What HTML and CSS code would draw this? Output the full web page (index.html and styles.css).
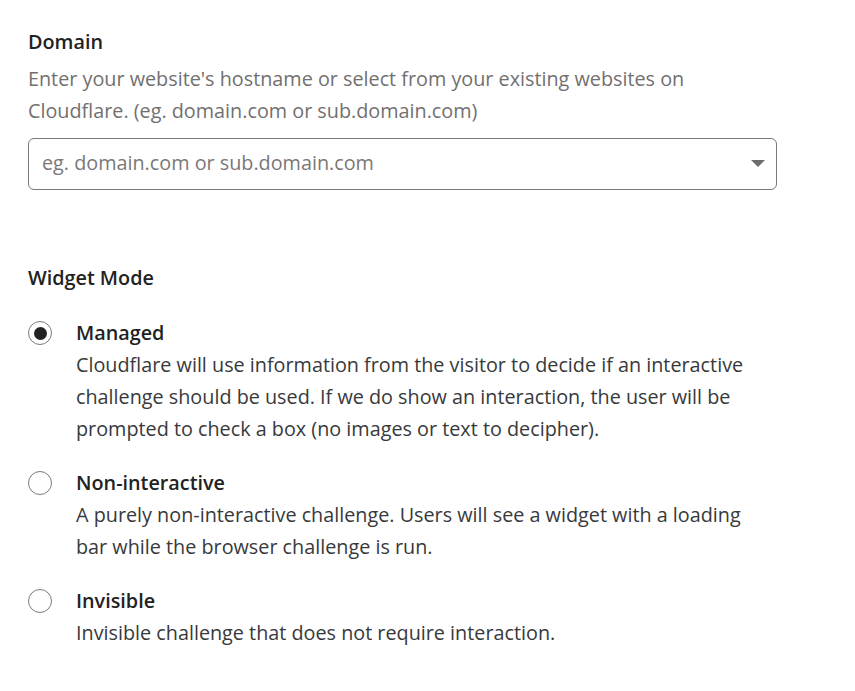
FILE: index.html
```html
<!DOCTYPE html>
<html lang="en">
<head>
    <meta charset="UTF-8">
    <meta name="viewport" content="width=device-width, initial-scale=1.0">
    <title>Turnstile widget</title>
    <link rel="stylesheet" href="styles.css">
</head>
<body>
    <div class="form">
        <div class="field">
            <label class="field-label" for="domain">Domain</label>
            <p class="field-help">Enter your website's hostname or select from your existing websites on Cloudflare. (eg. domain.com or sub.domain.com)</p>
            <div class="select">
                <input type="text" id="domain" placeholder="eg. domain.com or sub.domain.com">
                <span class="select-arrow"></span>
            </div>
        </div>

        <div class="field mode">
            <div class="field-label">Widget Mode</div>
            <label class="option">
                <input type="radio" name="mode" checked>
                <span class="radio"></span>
                <span class="option-text">
                    <span class="option-title">Managed</span>
                    <span class="option-desc">Cloudflare will use information from the visitor to decide if an interactive challenge should be used. If we do show an interaction, the user will be prompted to check a box (no images or text to decipher).</span>
                </span>
            </label>
            <label class="option">
                <input type="radio" name="mode">
                <span class="radio"></span>
                <span class="option-text">
                    <span class="option-title">Non-interactive</span>
                    <span class="option-desc">A purely non-interactive challenge. Users will see a widget with a loading bar while the browser challenge is run.</span>
                </span>
            </label>
            <label class="option">
                <input type="radio" name="mode">
                <span class="radio"></span>
                <span class="option-text">
                    <span class="option-title">Invisible</span>
                    <span class="option-desc">Invisible challenge that does not require interaction.</span>
                </span>
            </label>
        </div>
    </div>
</body>
</html>
```

FILE: styles.css
```css
body {
    margin: 0;
    background-color: #ffffff;
    font-family: "Open Sans", "Noto Sans", sans-serif;
    color: #222222;
}

.form {
    padding: 26px 28px;
    width: 750px;
}

.field-label {
    display: block;
    font-size: 19.8px;
    font-weight: 600;
    line-height: 32px;
    color: #222222;
}

.field-help {
    margin: 5px 0 0;
    font-size: 19.8px;
    line-height: 32px;
    color: #72706f;
}

.select {
    position: relative;
    margin-top: 11px;
}

.select input {
    box-sizing: border-box;
    width: 749px;
    height: 52px;
    padding: 0 40px 3px 13px;
    border: 1px solid #7a7a7a;
    border-radius: 6px;
    font-family: inherit;
    font-size: 19.8px;
    color: #222222;
    outline: none;
}

.select input::placeholder {
    color: #7a7878;
}

.select-arrow {
    position: absolute;
    right: 13px;
    top: 22px;
    width: 0;
    height: 0;
    border-left: 7px solid transparent;
    border-right: 7px solid transparent;
    border-top: 7px solid #6d6d6d;
}

.mode {
    margin-top: 72px;
}

.option {
    display: flex;
    align-items: flex-start;
    gap: 24px;
    margin-top: 23px;
    cursor: pointer;
}

.option + .option {
    margin-top: 22px;
}

.option input {
    display: none;
}

.radio {
    flex: none;
    box-sizing: border-box;
    width: 24px;
    height: 24px;
    margin-top: 4px;
    border: 1px solid #7a7a7a;
    border-radius: 50%;
    display: flex;
    align-items: center;
    justify-content: center;
}

.option input:checked + .radio::after {
    content: "";
    width: 13px;
    height: 13px;
    border-radius: 50%;
    background-color: #222222;
}

.option-text {
    display: flex;
    flex-direction: column;
    max-width: 685px;
}

.option-title {
    font-size: 19.8px;
    font-weight: 600;
    line-height: 32px;
    color: #222222;
}

.option-desc {
    font-size: 19.8px;
    line-height: 32px;
    color: #38393b;
}
```
